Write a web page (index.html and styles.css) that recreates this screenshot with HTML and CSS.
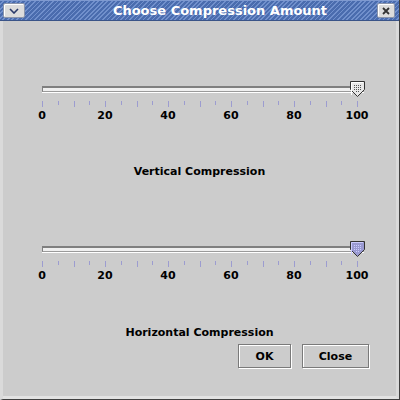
FILE: index.html
```html
<!DOCTYPE html>
<html>
<head>
<meta charset="utf-8">
<link rel="stylesheet" href="styles.css">
</head>
<body>
<div class="window">
  <div class="titlebar">
    <div class="tb-btn tb-menu">
      <svg width="10" height="6" viewBox="0 0 10 6"><path d="M1 1 L5 5 L9 1" fill="none" stroke="#2a3a6a" stroke-width="1.6"/></svg>
    </div>
    <div class="title">Choose Compression Amount</div>
    <div class="tb-btn tb-close">
      <svg width="8" height="8" viewBox="0 0 8 8"><path d="M1 1 L7 7 M7 1 L1 7" fill="none" stroke="#333" stroke-width="1.8"/></svg>
    </div>
  </div>
  <div class="content">
    <div class="slider first">
      <div class="slider-row">
        <div class="track"></div>
        <svg class="thumb" width="15" height="16" viewBox="0 0 15 16">
          <defs>
            <pattern id="dots1" width="2" height="2" patternUnits="userSpaceOnUse">
              <rect x="0" y="0" width="1" height="1" fill="#555"/>
            </pattern>
          </defs>
          <path d="M0.5 0.5 H14.5 V8.5 L7.5 15.5 L0.5 8.5 Z" fill="#e8e8e8" stroke="#333"/>
          <path d="M1.5 14 V1.5 H13" fill="none" stroke="#fff"/>
          <rect x="3" y="3" width="9" height="6" fill="url(#dots1)"/>
          <rect x="5" y="9" width="5" height="2" fill="url(#dots1)"/>
        </svg>
      </div>
      <div class="ticks">
        <i class="l"></i><i></i><i class="l"></i><i></i><i class="l"></i><i></i><i class="l"></i><i></i><i class="l"></i><i></i><i class="l"></i><i></i><i class="l"></i><i></i><i class="l"></i><i></i><i class="l"></i><i></i><i class="l"></i><i></i><i class="l"></i>
      </div>
      <div class="labels"><span>0</span><span>20</span><span>40</span><span>60</span><span>80</span><span>100</span></div>
    </div>
    <div class="caption cap1">Vertical Compression</div>
    <div class="slider second">
      <div class="slider-row">
        <div class="track"></div>
        <svg class="thumb" width="15" height="16" viewBox="0 0 15 16">
          <defs>
            <pattern id="dots2" width="2" height="2" patternUnits="userSpaceOnUse">
              <rect x="0" y="0" width="1" height="1" fill="#ccccff"/>
            </pattern>
          </defs>
          <path d="M0.5 0.5 H14.5 V8.5 L7.5 15.5 L0.5 8.5 Z" fill="#9a9ad2" stroke="#333"/>
          <path d="M1.5 14 V1.5 H13" fill="none" stroke="#ccccff"/>
          <rect x="3" y="3" width="9" height="6" fill="url(#dots2)"/>
          <rect x="5" y="9" width="5" height="2" fill="url(#dots2)"/>
        </svg>
      </div>
      <div class="ticks">
        <i class="l"></i><i></i><i class="l"></i><i></i><i class="l"></i><i></i><i class="l"></i><i></i><i class="l"></i><i></i><i class="l"></i><i></i><i class="l"></i><i></i><i class="l"></i><i></i><i class="l"></i><i></i><i class="l"></i><i></i><i class="l"></i>
      </div>
      <div class="labels"><span>0</span><span>20</span><span>40</span><span>60</span><span>80</span><span>100</span></div>
    </div>
    <div class="caption cap2">Horizontal Compression</div>
    <div class="buttons">
      <button class="btn ok">OK</button>
      <button class="btn close">Close</button>
    </div>
  </div>
</div>
</body>
</html>
```

FILE: styles.css
```css
html, body {
  margin: 0;
  padding: 0;
  background: #cccccc;
}
.window {
  width: 400px;
  height: 400px;
  box-sizing: border-box;
  background: #cccccc;
  border-left: 3px solid #dadada;
  border-right: 1px solid #404040;
  border-bottom: 1px solid #404040;
  display: flex;
  flex-direction: column;
  font-family: "DejaVu Sans", sans-serif;
  position: relative;
}
.titlebar {
  margin-left: -3px;
  height: 21px;
  flex: none;
  display: flex;
  align-items: center;
  background: repeating-linear-gradient(135deg, #4a6cae 0px, #4a6cae 2px, #7190cc 2px, #7190cc 3.2px);
  border-top: 1px solid #7f9ad0;
  box-sizing: border-box;
  border-bottom: 1px solid #3a5488;
}
.tb-btn {
  height: 15px;
  box-sizing: border-box;
  background: #dcdcdc;
  border: 1px solid #8a94aa;
  border-radius: 2px;
  display: flex;
  align-items: center;
  justify-content: center;
  box-shadow: inset 1px 1px 0 #fff;
}
.tb-menu {
  width: 22px;
  margin-left: 3px;
}
.tb-close {
  width: 18px;
  margin-right: 4px;
}
.title {
  flex: 1;
  text-align: center;
  color: #ffffff;
  font-weight: bold;
  font-size: 13px;
  line-height: 16px;
  padding-left: 38px;
}
.content {
  flex: 1;
  display: flex;
  flex-direction: column;
  border-right: 3px solid #dadada;
  border-bottom: 3px solid #e2e2e2;
}
.slider {
  display: flex;
  flex-direction: column;
}
.first {
  margin-top: 60px;
}
.second {
  margin-top: 63px;
}
.slider-row {
  position: relative;
  height: 16px;
  margin-left: 39px;
  width: 322px;
}
.track {
  margin-top: 5px;
  width: 321px;
  height: 3px;
  background: #efefef;
  border-top: 2px solid #7f7f7f;
  border-left: 1px solid #7f7f7f;
  border-bottom: 1px solid #9a9a9a;
  box-shadow: 0 1px 0 #ffffff;
  box-sizing: content-box;
}
.thumb {
  position: absolute;
  left: 308px;
  top: 0;
}
.ticks {
  margin-top: 4px;
  margin-left: 39px;
  width: 316px;
  height: 6px;
  display: flex;
  justify-content: space-between;
  align-items: flex-start;
}
.ticks i {
  display: block;
  width: 1px;
  height: 4px;
  background: #9c9cd0;
}
.ticks i.l {
  height: 6px;
}
.labels {
  margin-top: 2px;
  margin-left: 7.5px;
  display: flex;
}
.labels span {
  width: 63px;
  text-align: center;
  font-size: 11px;
  font-weight: bold;
  line-height: 13px;
  color: #000;
}
.caption {
  text-align: center;
  font-size: 11px;
  font-weight: bold;
  line-height: 13px;
  color: #000;
}
.cap1 {
  margin-top: 43px;
}
.cap2 {
  margin-top: 44px;
}
.buttons {
  margin-top: 5px;
  display: flex;
  justify-content: flex-end;
  gap: 11px;
  padding-right: 27px;
}
.btn {
  height: 24px;
  box-sizing: border-box;
  background: #cccccc;
  border: 1px solid #7a7a7a;
  box-shadow: 1px 1px 0 #ffffff, inset 1px 1px 0 #ffffff;
  font-family: "DejaVu Sans", sans-serif;
  font-size: 11px;
  font-weight: bold;
  color: #000;
  padding: 0;
  margin: 0;
}
.ok {
  width: 53px;
}
.close {
  width: 67px;
}
```
